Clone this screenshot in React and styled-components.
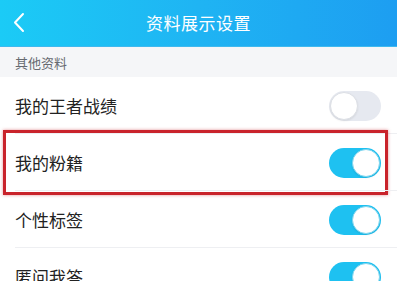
import React from "react";
import styled, { createGlobalStyle } from "styled-components";

const GlobalStyle = createGlobalStyle`
  body {
    margin: 0;
    background: #ffffff;
    font-family: "Noto Sans CJK SC", "Noto Sans", sans-serif;
  }
`;

const Page = styled.div`
  width: 397px;
  height: 281px;
  overflow: hidden;
  background: #ffffff;
`;

const Header = styled.div`
  height: 47px;
  display: grid;
  grid-template-columns: 60px 1fr 60px;
  align-items: center;
  background: linear-gradient(90deg, #1bcbf6 0%, #1fb4f3 50%, #1d9ef1 100%);
  border-bottom: 1px solid #3fb9ee;
  box-sizing: border-box;
`;

const Back = styled.button`
  padding: 0 0 2px 12px;
  border: none;
  background: none;
  display: flex;
`;

const Title = styled.h1`
  margin: 0 0 2px;
  text-align: center;
  font-size: 17px;
  font-weight: 400;
  color: #ffffff;
  letter-spacing: 0.5px;
`;

const Section = styled.div`
  height: 30px;
  background: #f5f6f8;
  display: flex;
  align-items: center;
  padding-left: 15px;
  font-size: 13px;
  color: #666a70;
`;

const Row = styled.div`
  position: relative;
  height: 57px;
  display: flex;
  align-items: center;
  justify-content: space-between;
  padding: 0 15px;
  &::after {
    content: "";
    position: absolute;
    left: 15px;
    right: 0;
    bottom: 0;
    height: 1px;
    background: ${(p) => (p.$last ? "transparent" : "#eeeff2")};
  }
`;

const Label = styled.span`
  font-size: 17px;
  color: #222222;
`;

const Track = styled.div`
  width: 52px;
  height: 30px;
  border-radius: 15px;
  box-sizing: border-box;
  padding: 1px;
  margin-right: 1px;
  display: flex;
  justify-content: ${(p) => (p.$on ? "flex-end" : "flex-start")};
  background: ${(p) => (p.$on ? "#1ec1f1" : "#e6e9f0")};
`;

const Knob = styled.div`
  width: 28px;
  height: 28px;
  border-radius: 50%;
  background: #ffffff;
  box-sizing: border-box;
  border: 1px solid ${(p) => (p.$on ? "#7fd6ef" : "#dcdfe5")};
  box-shadow: 0 1px 2px rgba(0, 0, 0, 0.08);
`;

const Highlight = styled.div`
  position: absolute;
  top: -4px;
  bottom: -4px;
  left: 3px;
  right: 9px;
  border: 3px solid #c9232b;
  box-shadow: 0 0 3px rgba(201, 35, 43, 0.5);
  pointer-events: none;
`;

const Toggle = ({ on }) => (
  <Track $on={on}>
    <Knob $on={on} />
  </Track>
);

const items = [
  { label: "我的王者战绩", on: false },
  { label: "我的粉籍", on: true, marked: true },
  { label: "个性标签", on: true },
  { label: "匿问我答", on: true, last: true },
];

export default function App() {
  return (
    <Page>
      <GlobalStyle />
      <Header>
        <Back>
          <svg width="14" height="21" viewBox="0 0 14 21">
            <path
              d="M11 2 L3 10.5 L11 19"
              fill="none"
              stroke="#ffffff"
              strokeWidth="2"
              strokeLinecap="round"
              strokeLinejoin="round"
            />
          </svg>
        </Back>
        <Title>资料展示设置</Title>
        <span />
      </Header>
      <Section>其他资料</Section>
      {items.map((it) => (
        <Row key={it.label} $last={it.last}>
          <Label>{it.label}</Label>
          <Toggle on={it.on} />
          {it.marked && <Highlight />}
        </Row>
      ))}
    </Page>
  );
}
